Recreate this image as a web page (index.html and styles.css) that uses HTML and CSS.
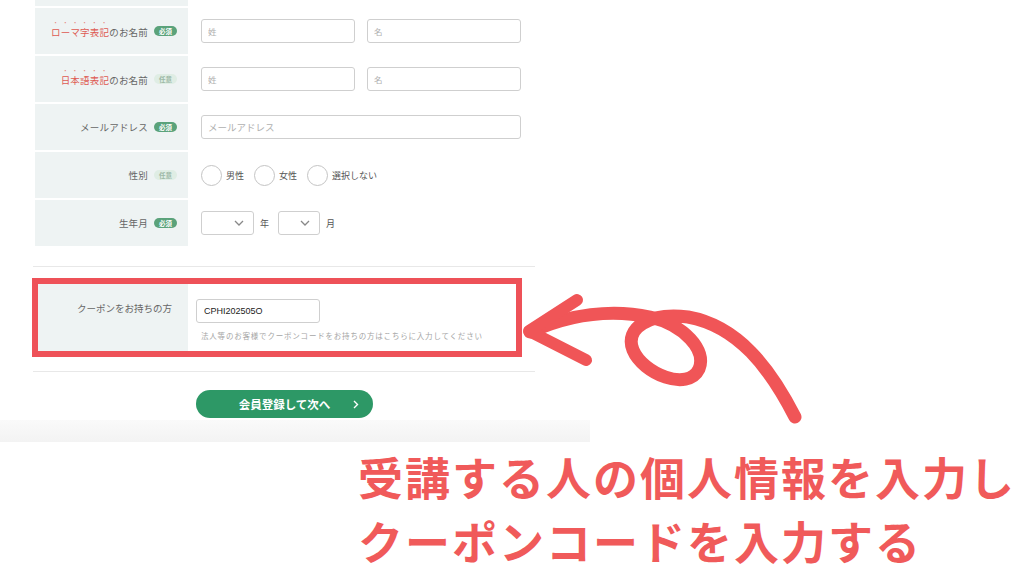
FILE: index.html
```html
<!DOCTYPE html>
<html lang="ja">
<head>
	<meta charset="UTF-8">
	<title>会員登録</title>
	<link rel="stylesheet" href="styles.css">
</head>
<body>

	<div class="shot">
		<div class="form">
			<div class="row stub">
				<div class="th"></div>
				<div class="td"></div>
			</div>

			<div class="row">
				<div class="th"><span class="lbl emph"><em class="accent">ローマ字表記</em>のお名前</span><span class="badge req">必須</span></div>
				<div class="td">
					<input class="field half" placeholder="姓">
					<input class="field half" placeholder="名">
				</div>
			</div>

			<div class="row">
				<div class="th"><span class="lbl emph"><em class="accent">日本語表記</em>のお名前</span><span class="badge opt">任意</span></div>
				<div class="td">
					<input class="field half" placeholder="姓">
					<input class="field half" placeholder="名">
				</div>
			</div>

			<div class="row">
				<div class="th"><span class="lbl">メールアドレス</span><span class="badge req">必須</span></div>
				<div class="td">
					<input class="field full" placeholder="メールアドレス">
				</div>
			</div>

			<div class="row">
				<div class="th"><span class="lbl">性別</span><span class="badge opt">任意</span></div>
				<div class="td radios">
					<label class="radio"><span class="dot"></span>男性</label>
					<label class="radio"><span class="dot"></span>女性</label>
					<label class="radio"><span class="dot"></span>選択しない</label>
				</div>
			</div>

			<div class="row">
				<div class="th"><span class="lbl">生年月</span><span class="badge req">必須</span></div>
				<div class="td dates">
					<div class="select year">
						<svg width="10" height="6" viewBox="0 0 10 6"><path d="M1 1l4 4 4-4" fill="none" stroke="#888" stroke-width="1.3"/></svg>
					</div>
					<span class="unit">年</span>
					<div class="select month">
						<svg width="10" height="6" viewBox="0 0 10 6"><path d="M1 1l4 4 4-4" fill="none" stroke="#888" stroke-width="1.3"/></svg>
					</div>
					<span class="unit">月</span>
				</div>
			</div>
		</div>

		<div class="rule"></div>

		<div class="coupon">
			<div class="coupon_th">クーポンをお持ちの方</div>
			<div class="coupon_td">
				<input class="field code" value="CPHI202505O">
				<p class="help">法人等のお客様でクーポンコードをお持ちの方はこちらに入力してください</p>
			</div>
		</div>

		<div class="rule rule_low"></div>

		<div class="actions">
			<button class="next">会員登録して次へ<span class="chev">
				<svg width="6" height="9" viewBox="0 0 6 9"><path d="M1 1l3.5 3.5L1 8" fill="none" stroke="#fff" stroke-width="1.4"/></svg>
			</span></button>
		</div>

		<div class="fade"></div>
	</div>

	<p class="caption">受講する人の個人情報を入力し<br>クーポンコードを入力する</p>

	<!-- 手書き風の矢印 -->
	<svg class="arrow" viewBox="0 0 1024 576" width="1024" height="576">
		<path d="M795 417 C770 368 738 326 688 317 C650 312 624 328 633 350 C643 374 688 392 699 369 C707 350 684 325 650 317 C612 309 570 314 530 332"
			fill="none" stroke="#f05557" stroke-width="13" stroke-linecap="round" stroke-linejoin="round"/>
		<path d="M577 300 L529 331 L586 360" fill="none" stroke="#f05557" stroke-width="12" stroke-linecap="round" stroke-linejoin="round"/>
	</svg>

</body>
</html>
```

FILE: styles.css
```css
body{
	margin:0;
	background:#fff;
	font-family:"Noto Sans CJK JP", "Noto Sans", sans-serif;
	color:#555;
}

.shot{
	width:590px;
	background:#fff;
}

/* 入力テーブル */
.form{
	width:500px;
	margin-left:35px;
}
.row{
	display:grid;
	grid-template-columns:153px 1fr;
	height:46px;
	border-top:2px solid #fff;
}
.row.stub{
	height:6px;
	border-top:0;
}
.th{
	background:#eef3f3;
	display:flex;
	align-items:center;
	justify-content:flex-end;
	gap:6px;
	padding-right:11px;
}
.td{
	display:flex;
	align-items:center;
	gap:12px;
	padding-left:13px;
}
.lbl{
	font-size:9.5px;
	color:#666;
	letter-spacing:0.2px;
}
.lbl.emph{
	padding-bottom:6px;
}
.accent{
	font-style:normal;
	color:#de5a52;
	text-emphasis:filled dot #e7857d;
	-webkit-text-emphasis:filled dot #e7857d;
}
.badge{
	display:inline-block;
	width:23px;
	height:10px;
	line-height:10px;
	border-radius:5px;
	font-size:6.5px;
	font-weight:bold;
	text-align:center;
}
.badge.req{
	background:#5aa27a;
	color:#fff;
}
.badge.opt{
	background:#dfede4;
	color:#9cb8a6;
}

.field{
	box-sizing:border-box;
	height:24px;
	border:1px solid #cfcfcf;
	border-radius:3px;
	padding:0 6px;
	font-family:inherit;
	font-size:8.5px;
	color:#333;
	background:#fff;
	outline:none;
}
.field::placeholder{
	color:#b0b0b0;
}
.field.half{
	width:154px;
}
.field.full{
	width:320px;
	font-size:9.5px;
}

.radios{
	gap:0;
}
.radio{
	display:flex;
	align-items:center;
	font-size:9px;
	color:#555;
	margin-right:10px;
}
.dot{
	width:19px;
	height:19px;
	border:1px solid #c4c4c4;
	border-radius:50%;
	margin-right:4px;
	background:#fff;
}

.dates{
	gap:0;
}
.select{
	box-sizing:border-box;
	height:24px;
	border:1px solid #cfcfcf;
	border-radius:3px;
	display:flex;
	align-items:center;
	justify-content:flex-end;
	padding-right:9px;
}
.select.year{
	width:53px;
}
.select.month{
	width:42px;
}
.unit{
	font-size:9px;
	color:#555;
	margin:0 9px 0 6px;
}

.rule{
	width:502px;
	height:1px;
	background:#e8e8e8;
	margin:20px 0 0 33px;
}
.rule_low{
	margin-top:14px;
}

/* クーポン */
.coupon{
	box-sizing:border-box;
	width:490px;
	height:79px;
	margin:11px 0 0 32px;
	border:6px solid #ee5158;
	display:grid;
	grid-template-columns:150px 1fr;
}
.coupon_th{
	background:#eef3f3;
	text-align:right;
	padding:17px 16px 0 0;
	font-size:9.5px;
	color:#666;
}
.coupon_td{
	padding:11px 0 0 8px;
}
.field.code{
	width:124px;
	font-family:"Liberation Sans", sans-serif;
	font-size:9px;
	color:#222;
	padding:0 7px;
}
.help{
	margin:7px 0 0 5px;
	font-size:7.5px;
	color:#a5a5a5;
	letter-spacing:0.8px;
}

.actions{
	padding:18px 0 0 196px;
}
.next{
	width:177px;
	height:28px;
	border:0;
	border-radius:14px;
	background:#2d9866;
	color:#fff;
	font-family:inherit;
	font-size:11.5px;
	font-weight:bold;
	padding:0;
	display:flex;
	align-items:center;
	justify-content:center;
	position:relative;
}
.chev{
	position:absolute;
	right:14px;
	top:10px;
	line-height:0;
}

.fade{
	height:22px;
	margin-top:2px;
	background:linear-gradient(#fafafa, #f3f3f3);
}

.caption{
	margin:3px 0 0 358px;
	font-size:45px;
	line-height:64px;
	font-weight:bold;
	letter-spacing:2px;
	color:#f05a5a;
	white-space:nowrap;
}

.arrow{
	position:absolute;
	left:0;
	top:0;
	pointer-events:none;
}
```
